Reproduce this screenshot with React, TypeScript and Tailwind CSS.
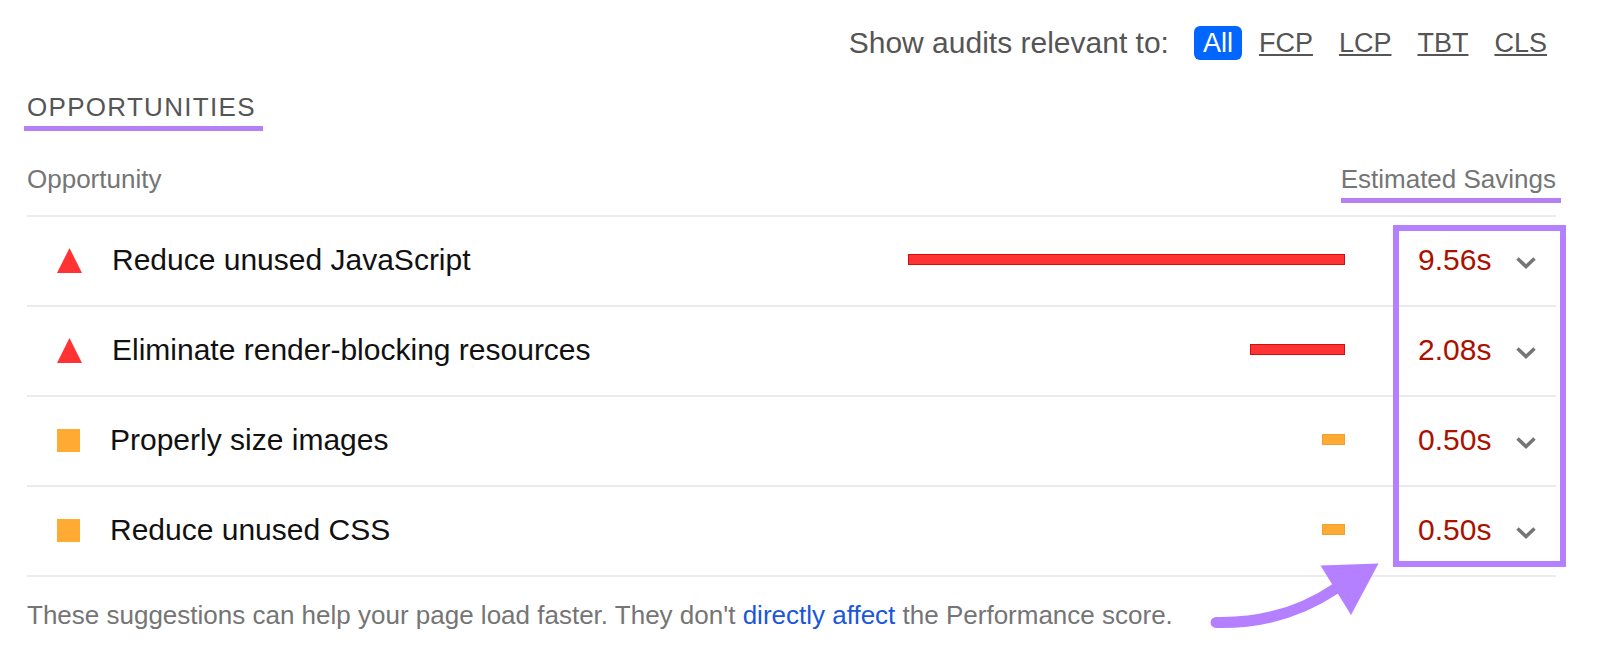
const filters = ["All", "FCP", "LCP", "TBT", "CLS"];

const opportunities = [
  { title: "Reduce unused JavaScript", savings: 9.56, level: "fail" },
  { title: "Eliminate render-blocking resources", savings: 2.08, level: "fail" },
  { title: "Properly size images", savings: 0.5, level: "average" },
  { title: "Reduce unused CSS", savings: 0.5, level: "average" },
];

const maxSavings = 9.56;

function LevelIcon({ level }: { level: string }) {
  if (level === "fail") {
    return (
      <svg className="size-[25px] shrink-0" viewBox="0 0 25 25" fill="#ff3333">
        <path d="M12.5 0L25 25H0z" />
      </svg>
    );
  }
  return <span className="size-[23px] shrink-0 bg-[#ffaa33]" />;
}

export default function App() {
  return (
    <main className="bg-white pt-[26px] pr-11 pb-[26px] pl-[27px] font-['Liberation_Sans',Arial,sans-serif] text-[#757575]">
      <div className="flex items-center justify-end text-[#555555]">
        <span className="mr-[25px] text-[30px] leading-[34px]">
          Show audits relevant to:
        </span>
        <div className="flex gap-2 text-[27px] leading-[34px]">
          {filters.map((name) => (
            <button
              key={name}
              type="button"
              className={
                name === "All"
                  ? "rounded-md bg-[#0066ff] px-[9px] text-white"
                  : "px-[9px] underline decoration-2 underline-offset-2"
              }
            >
              {name}
            </button>
          ))}
        </div>
      </div>

      <h2 className="mt-[31px] -ml-[3px] w-fit border-b-[5px] border-[#b580f5] pr-[7px] pb-[3px] pl-[3px] text-[26px] leading-8 tracking-wider text-[#555555]">
        OPPORTUNITIES
      </h2>

      <div className="relative mt-8">
        <table className="w-full table-fixed border-separate border-spacing-0">
          <colgroup>
            <col />
            <col className="w-[437px]" />
            <col className="w-[211px]" />
          </colgroup>
          <thead>
            <tr className="text-[26px] leading-8">
              <th className="border-b-2 border-[#ebebeb] p-0 text-left align-top font-normal">
                Opportunity
              </th>
              <th
                colSpan={2}
                className="border-b-2 border-[#ebebeb] p-0 pb-3 font-normal"
              >
                <span className="-mr-[5px] ml-auto block w-fit border-b-[5px] border-[#b580f5] pr-[5px] pb-[3px]">
                  Estimated Savings
                </span>
              </th>
            </tr>
          </thead>
          <tbody className="text-[30px] leading-9">
            {opportunities.map((item) => (
              <tr key={item.title}>
                <td className="h-[90px] border-b-2 border-[#ebebeb] p-0 pb-0.5 pl-[30px]">
                  <div className="flex items-center gap-[30px] text-[#111111]">
                    <LevelIcon level={item.level} />
                    {item.title}
                  </div>
                </td>
                <td className="border-b-2 border-[#ebebeb] p-0 pb-1">
                  <div
                    className={
                      item.level === "fail"
                        ? "ml-auto h-[11px] border border-[#cc1111] bg-[#ff3333]"
                        : "ml-auto h-[11px] border border-[#f0a030] bg-[#ffaa33]"
                    }
                    style={{ width: `${(item.savings / maxSavings) * 100}%` }}
                  />
                </td>
                <td className="border-b-2 border-[#ebebeb] p-0 pr-5 pb-0.5 pl-[73px]">
                  <div className="flex items-center justify-between text-[#aa1100]">
                    {item.savings.toFixed(2)}s
                    <button type="button" aria-label={`Expand ${item.title}`}>
                      <svg
                        className="mt-1.5 h-3 w-5"
                        viewBox="0 0 20 12"
                        fill="none"
                        stroke="#757575"
                        strokeWidth="3.5"
                      >
                        <path d="M1.5 1.5L10 9.5L18.5 1.5" />
                      </svg>
                    </button>
                  </div>
                </td>
              </tr>
            ))}
          </tbody>
        </table>

        {/* savings highlight */}
        <div className="pointer-events-none absolute top-[62px] -right-2.5 bottom-2.5 w-[173px] border-[6px] border-[#b580ff]" />
        <svg
          className="pointer-events-none absolute right-[176px] -bottom-[53px] h-[68px] w-[172px]"
          viewBox="0 0 172 68"
          fill="none"
        >
          <path
            d="M8 60.5Q75 62 127 27"
            stroke="#b580ff"
            strokeWidth="11"
            strokeLinecap="round"
          />
          <path d="M112.5 3.5L170.5 1.5L143 53z" fill="#b580ff" />
        </svg>
      </div>

      <p className="mt-[22px] text-[26px] leading-8">
        These suggestions can help your page load faster. They don't{" "}
        <a href="#" className="text-[#1a56db]">
          directly affect
        </a>{" "}
        the Performance score.
      </p>
    </main>
  );
}
